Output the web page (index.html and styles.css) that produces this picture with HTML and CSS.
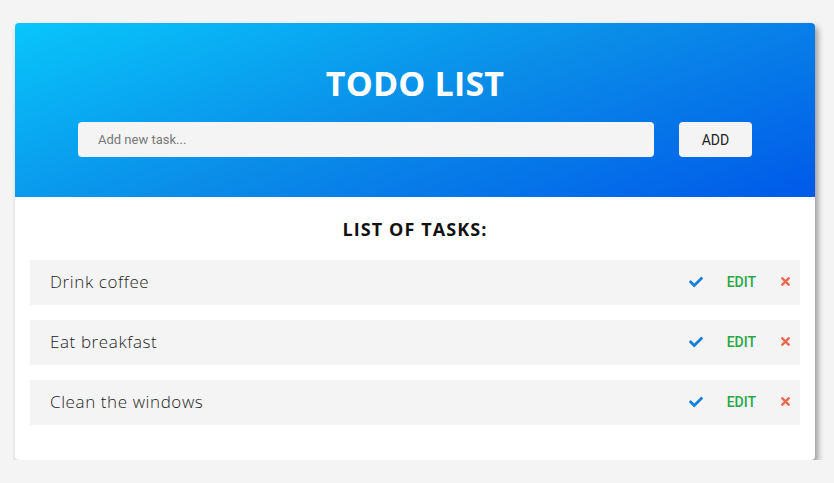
FILE: index.html
```html
<!DOCTYPE html>
<html>
<head>
<meta charset="utf-8">
<link rel="stylesheet" href="styles.css">
</head>
<body>
<div class="card">
  <header class="header">
    <h1 class="title">TODO LIST</h1>
    <form class="add-form">
      <input class="add-input" type="text" placeholder="Add new task...">
      <button class="add-btn" type="button">ADD</button>
    </form>
  </header>
  <section class="tasks">
    <h2 class="tasks-title">LIST OF TASKS:</h2>
    <ul class="task-list">
      <li class="task">
        <span class="task-text">Drink coffee</span>
        <span class="actions">
          <svg class="icon-check" viewBox="0 0 512 512" width="14" height="14"><path fill="#1a7fd9" d="M173.9 439.4l-166.4-166.4c-10-10-10-26.2 0-36.2l36.2-36.2c10-10 26.2-10 36.2 0L192 312.7 432.1 72.6c10-10 26.2-10 36.2 0l36.2 36.2c10 10 10 26.2 0 36.2L210.1 439.4c-10 10-26.2 10-36.2 0z"/></svg>
          <span class="edit">EDIT</span>
          <svg class="icon-x" viewBox="0 0 352 512" width="9" height="13"><path fill="#ea6a4f" d="M242.7 256l100.1-100.1c12.3-12.3 12.3-32.2 0-44.5l-22.2-22.2c-12.3-12.3-32.2-12.3-44.5 0L176 189.3 75.9 89.2c-12.3-12.3-32.2-12.3-44.5 0L9.2 111.4c-12.3 12.3-12.3 32.2 0 44.5L109.3 256 9.2 356.1c-12.3 12.3-12.3 32.2 0 44.5l22.2 22.2c12.3 12.3 32.2 12.3 44.5 0L176 322.7l100.1 100.1c12.3 12.3 32.2 12.3 44.5 0l22.2-22.2c12.3-12.3 12.3-32.2 0-44.5L242.7 256z"/></svg>
        </span>
      </li>
      <li class="task">
        <span class="task-text">Eat breakfast</span>
        <span class="actions">
          <svg class="icon-check" viewBox="0 0 512 512" width="14" height="14"><path fill="#1a7fd9" d="M173.9 439.4l-166.4-166.4c-10-10-10-26.2 0-36.2l36.2-36.2c10-10 26.2-10 36.2 0L192 312.7 432.1 72.6c10-10 26.2-10 36.2 0l36.2 36.2c10 10 10 26.2 0 36.2L210.1 439.4c-10 10-26.2 10-36.2 0z"/></svg>
          <span class="edit">EDIT</span>
          <svg class="icon-x" viewBox="0 0 352 512" width="9" height="13"><path fill="#ea6a4f" d="M242.7 256l100.1-100.1c12.3-12.3 12.3-32.2 0-44.5l-22.2-22.2c-12.3-12.3-32.2-12.3-44.5 0L176 189.3 75.9 89.2c-12.3-12.3-32.2-12.3-44.5 0L9.2 111.4c-12.3 12.3-12.3 32.2 0 44.5L109.3 256 9.2 356.1c-12.3 12.3-12.3 32.2 0 44.5l22.2 22.2c12.3 12.3 32.2 12.3 44.5 0L176 322.7l100.1 100.1c12.3 12.3 32.2 12.3 44.5 0l22.2-22.2c12.3-12.3 12.3-32.2 0-44.5L242.7 256z"/></svg>
        </span>
      </li>
      <li class="task">
        <span class="task-text">Clean the windows</span>
        <span class="actions">
          <svg class="icon-check" viewBox="0 0 512 512" width="14" height="14"><path fill="#1a7fd9" d="M173.9 439.4l-166.4-166.4c-10-10-10-26.2 0-36.2l36.2-36.2c10-10 26.2-10 36.2 0L192 312.7 432.1 72.6c10-10 26.2-10 36.2 0l36.2 36.2c10 10 10 26.2 0 36.2L210.1 439.4c-10 10-26.2 10-36.2 0z"/></svg>
          <span class="edit">EDIT</span>
          <svg class="icon-x" viewBox="0 0 352 512" width="9" height="13"><path fill="#ea6a4f" d="M242.7 256l100.1-100.1c12.3-12.3 12.3-32.2 0-44.5l-22.2-22.2c-12.3-12.3-32.2-12.3-44.5 0L176 189.3 75.9 89.2c-12.3-12.3-32.2-12.3-44.5 0L9.2 111.4c-12.3 12.3-12.3 32.2 0 44.5L109.3 256 9.2 356.1c-12.3 12.3-12.3 32.2 0 44.5l22.2 22.2c12.3 12.3 32.2 12.3 44.5 0L176 322.7l100.1 100.1c12.3 12.3 32.2 12.3 44.5 0l22.2-22.2c12.3-12.3 12.3-32.2 0-44.5L242.7 256z"/></svg>
        </span>
      </li>
    </ul>
  </section>
</div>
</body>
</html>
```

FILE: styles.css
```css
* { box-sizing: border-box; }
html, body { margin: 0; padding: 0; }
body {
  background: #f4f4f4;
  font-family: "Open Sans", "Noto Sans", sans-serif;
  padding: 23px 19px 0 15px;
}
.card {
  width: 800px;
  height: 437px;
  background: #fff;
  border-radius: 4px;
  box-shadow: 3px 4px 6px rgba(0, 0, 0, 0.38);
  overflow: hidden;
}
.header {
  height: 174px;
  background: linear-gradient(160deg, #08c6fb 0%, #0a8ce8 50%, #0059e9 100%);
  padding-top: 42px;
}
.title {
  margin: 0;
  text-align: center;
  color: #fff;
  font-family: "Open Sans", sans-serif;
  font-weight: 700;
  font-size: 34px;
  line-height: 36px;
  letter-spacing: 0.2px;
}
.add-form {
  display: flex;
  gap: 25px;
  margin: 21px 0 0 63px;
}
.add-input {
  width: 576px;
  height: 35px;
  border: none;
  border-radius: 4px;
  background: #f4f4f4;
  padding: 0 20px;
  font-family: Roboto, sans-serif;
  font-size: 13px;
  color: #333;
  outline: none;
}
.add-input::placeholder { color: #777; }
.add-btn {
  width: 73px;
  height: 35px;
  border: none;
  border-radius: 4px;
  background: #f4f4f4;
  font-family: Roboto, sans-serif;
  font-size: 14px;
  color: #222;
  padding: 0;
}
.tasks {
  padding: 20px 15px 0;
}
.tasks-title {
  margin: 0;
  text-align: center;
  font-family: "Open Sans", sans-serif;
  font-weight: 700;
  font-size: 18px;
  line-height: 24px;
  letter-spacing: 1.1px;
  color: #111;
}
.task-list {
  list-style: none;
  margin: 19px 0 0;
  padding: 0;
  display: flex;
  flex-direction: column;
  gap: 15px;
}
.task {
  height: 45px;
  background: #f4f4f4;
  display: flex;
  align-items: center;
  justify-content: space-between;
  padding: 0 10px 2px 20px;
}
.task-text {
  font-family: "Open Sans", sans-serif;
  font-size: 17px;
  font-weight: 300;
  letter-spacing: 0.6px;
  color: #1e1e1e;
}
.actions {
  display: flex;
  align-items: center;
}
.icon-check { margin-right: 24px; }
.edit {
  font-family: Roboto, sans-serif;
  font-weight: 500;
  font-size: 14px;
  color: #28a745;
  margin-right: 25px;
}
.icon-x { display: block; }
```
